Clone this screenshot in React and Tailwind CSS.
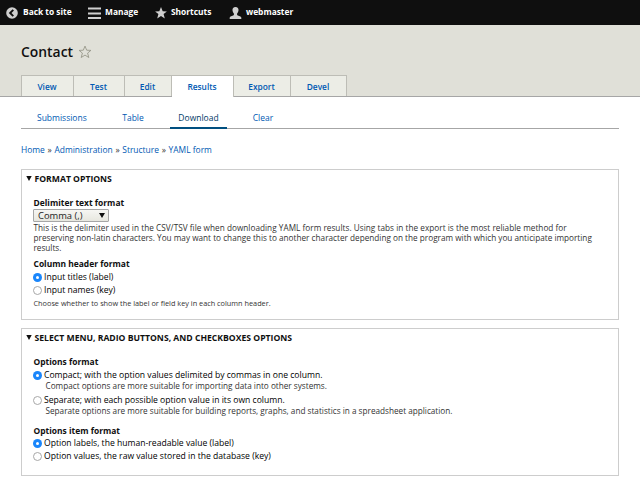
const tabs = [
  { label: 'View', cls: 'w-[53px] border-l' },
  { label: 'Test', cls: 'w-[51px]' },
  { label: 'Edit', cls: 'w-[47px]' },
  { label: 'Results', cls: 'w-[62px]', active: true },
  { label: 'Export', cls: 'w-[57px]' },
  { label: 'Devel', cls: 'w-[56px]' },
];

function BackIcon() {
  return (
    <svg className="size-3" viewBox="0 0 12 12">
      <circle cx="6" cy="6" r="5.8" fill="#cfcfcf" />
      <path d="M7.3 2.8 4.1 6l3.200 3.200" fill="none" stroke="#0f0f0f" strokeWidth="1.9" />
    </svg>
  );
}

function MenuIcon() {
  return (
    <svg className="h-3 w-[13px]" viewBox="0 0 13 12">
      <path d="M0 1.5h13M0 6.500h13M0 11h13" stroke="#cfcfcf" strokeWidth="2" />
    </svg>
  );
}

const starPath = 'M6 .1 7.7 4.2l4.2.2-3.300 2.700 1.200 4.400L6 9.100l-3.800 2.400 1.200-4.400L.1 4.400l4.200-.2z';

function UserIcon() {
  return (
    <svg className="h-3 w-[13px]" viewBox="0 0 13 12">
      <path
        d="M6.5 0C8.600 0 9.700 1.500 9.500 3.300 9.400 4.900 8.600 5.900 8.100 6.500v1.600c.4.900 3.700 1 4.200 2.300V12H.7v-1.600c.5-1.300 3.800-1.400 4.200-2.300V6.500C4.400 5.900 3.600 4.900 3.500 3.300 3.300 1.500 4.400 0 6.500 0z"
        fill="#cfcfcf"
      />
    </svg>
  );
}

function Radio({ checked, label, className }) {
  return (
    <label className={`flex items-center text-[8.6px] text-black ${className}`}>
      <span
        className={
          checked
            ? 'mr-0.5 flex size-[9px] items-center justify-center rounded-full bg-[#1a86fb]'
            : 'mr-0.5 size-[9px] rounded-full border border-[#a8a8a8] bg-white'
        }
      >
        {checked && <span className="size-[3px] rounded-full bg-white" />}
      </span>
      {label}
    </label>
  );
}

function Heading({ children, className = '' }) {
  return (
    <div className={`flex h-3 items-center pl-[0.5px] text-[8.45px] font-bold text-[#0f0f0f] ${className}`}>
      {children}
    </div>
  );
}

function Fieldset({ title, className, children }) {
  return (
    <section className={`mr-[21px] ml-[21px] border border-[#cdcdcd] ${className}`}>
      <div className="flex h-[18px] items-center pt-px pl-[3.5px] text-[8.64px] font-bold text-[#0f0f0f]">
        <svg className="mr-[3px] mb-0.5 h-[5px] w-1.5" viewBox="0 0 6 5">
          <path d="M.3 0h5.400L3 5z" fill="#0f0f0f" />
        </svg>
        {title}
      </div>
      <div className="pt-[9px] pl-[11px]">{children}</div>
    </section>
  );
}

export default function App() {
  return (
    <div className="h-[480px] w-[640px] overflow-hidden bg-white font-['Open_Sans',sans-serif] leading-none whitespace-nowrap text-[#333]">
      <nav className="flex h-[25px] items-center bg-[#0f0f0f] pl-1.5 text-[8.4px] font-bold text-white">
        <a className="flex w-[82px] items-center gap-[5px]"><BackIcon />Back to site</a>
        <a className="flex w-[67px] items-center gap-1"><MenuIcon />Manage</a>
        <a className="flex w-[74px] items-center gap-1">
          <svg className="size-3" viewBox="0 0 12 12"><path d={starPath} fill="#cfcfcf" /></svg>
          Shortcuts
        </a>
        <a className="flex items-center gap-1"><UserIcon />webmaster</a>
      </nav>

      <header className="h-[72px] border-b border-[#a6a6a6] bg-[#e0e0d8] pl-[21px]">
        <h1 className="flex h-[50px] items-center pt-1 text-[13.9px] font-semibold text-[#111]">
          Contact
          <svg className="ml-1.5 size-3" viewBox="0 0 12 12">
            <path d={starPath} fill="none" stroke="#8f8f80" strokeWidth=".8" />
          </svg>
        </h1>
        <div className="flex text-[8.35px] font-semibold text-[#0059b3]">
          {tabs.map((t) => (
            <a
              key={t.label}
              className={`flex items-center justify-center border-t border-r border-[#bdbdb6] pr-px ${t.cls} ${
                t.active ? 'h-[22px] bg-white pt-px' : 'h-[21px] bg-[#ecede6] pt-0.5'
              }`}
            >
              {t.label}
            </a>
          ))}
        </div>
      </header>

      <div className="mx-[21px] flex h-8 border-b border-[#a6a6a6] pt-2.5 pl-2 text-[8.5px] font-medium text-[#0059b3]">
        <a className="flex h-[22px] w-[67px] items-center pt-px pl-2">Submissions</a>
        <a className="flex h-[22px] w-[74px] items-center justify-center pt-px pr-[2px] pl-[2px]">Table</a>
        <a className="flex h-[22px] w-[57px] items-center justify-center border-b-2 border-[#004f80] pt-[3px] text-[#003a66]">Download</a>
        <a className="flex h-[22px] w-[72px] items-center justify-center pt-px">Clear</a>
      </div>

      <div className="flex h-10 items-center gap-[2.700px] pt-[3px] pl-[21px] text-[8.45px] font-medium text-[#0059b3]">
        <a>Home</a><span className="text-[#333]">»</span>
        <a>Administration</a><span className="text-[#333]">»</span>
        <a>Structure</a><span className="text-[#333]">»</span>
        <a>YAML form</a>
      </div>

      <Fieldset title="FORMAT OPTIONS" className="h-[151px]">
        <Heading className="pt-px">Delimiter text format</Heading>
        <div className="flex h-[13px] w-[76px] items-center justify-between rounded-[1px] border border-[#a6a6a6] bg-linear-to-b from-[#f6f6f3] to-[#e7e7df] pr-[3px] pl-1 text-[9.37px] text-[#222]">
          Comma (,)
          <svg className="h-[5px] w-1.5" viewBox="0 0 6 5"><path d="M0 0h6L3 5z" fill="#0f0f0f" /></svg>
        </div>
        <div className="h-8 pt-px pl-[0.5px] text-[8.2px] leading-[10.2px] text-[#333]">
          <p className="tracking-[0.035px]">This is the delimiter used in the CSV/TSV file when downloading YAML form results. Using tabs in the export is the most reliable method for</p>
          <p className="tracking-[0.010px]">preserving non-latin characters. You may want to change this to another character depending on the program with which you anticipate importing</p>
          <p>results.</p>
        </div>
        <Heading className="mt-1 mb-px pt-px">Column header format</Heading>
        <Radio checked label="Input titles (label)" className="h-[13px]" />
        <Radio label="Input names (key)" className="h-[13px]" />
        <div className="mt-px flex h-3 items-center pl-[0.5px] text-[7.32px] text-[#333]">
          Choose whether to show the label or field key in each column header.
        </div>
      </Fieldset>

      <Fieldset title="SELECT MENU, RADIO BUTTONS, AND CHECKBOXES OPTIONS" className="mt-2 h-[148px]">
        <Heading className="pt-px">Options format</Heading>
        <Radio checked label="Compact; with the option values delimited by commas in one column." className="h-3.5" />
        <p className="flex h-2 items-center pl-[12.5px] text-[8.2px] text-[#333]">Compact options are more suitable for importing data into other systems.</p>
        <Radio label="Separate; with each possible option value in its own column." className="mt-[3px] h-3.5" />
        <p className="flex h-2 items-center pl-[12.5px] text-[8.2px] text-[#333]">Separate options are more suitable for building reports, graphs, and statistics in a spreadsheet application.</p>
        <Heading className="mt-2.5 pt-px">Options item format</Heading>
        <Radio checked label="Option labels, the human-readable value (label)" className="h-[13px]" />
        <Radio label="Option values, the raw value stored in the database (key)" className="h-[13px]" />
      </Fieldset>
    </div>
  );
}
